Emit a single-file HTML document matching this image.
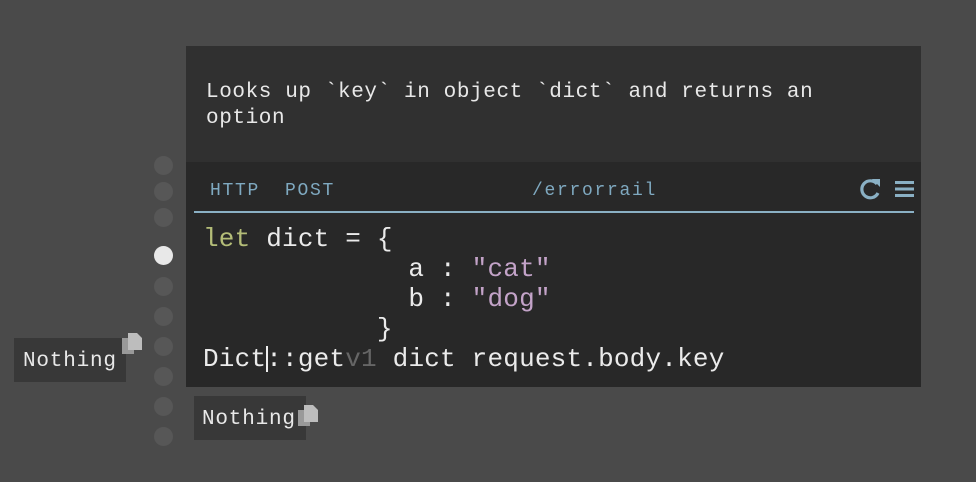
<!DOCTYPE html>
<html><head><meta charset="utf-8"><style>
*{margin:0;padding:0;box-sizing:border-box}
body{width:976px;height:482px;background:#4a4a4a;position:relative;overflow:hidden;font-family:"Liberation Mono",monospace;}
.abs{position:absolute;white-space:pre}
.doc{left:186px;top:46px;width:735px;height:116px;background:#303030}
.code{left:186px;top:162px;width:735px;height:225px;background:#282828}
.dot{position:absolute;left:154px;width:19px;height:19px;border-radius:50%;background:#575757}
.nt{background:#383838;color:#e8e8e8;font-size:21px;letter-spacing:0.8px;padding:0}
.c{font-size:26px;letter-spacing:0.2px;color:#ebebeb}
</style></head><body>
<div class="abs doc"></div>
<div class="abs code"></div>
<div class="abs" style="left:206px;top:80px;font-size:21px;letter-spacing:0.6px;color:#e8e8e8;line-height:26px">Looks up `key` in object `dict` and returns an
option</div>
<div class="abs" style="left:210px;top:181px;font-size:18px;letter-spacing:1.7px;color:#7fa9c0">HTTP  POST</div>
<div class="abs" style="left:532px;top:181px;font-size:18px;letter-spacing:1.7px;color:#7fa9c0">/errorrail</div>
<div class="abs" style="left:194px;top:211px;width:720px;height:2px;background:#8ab0c4"></div>
<svg class="abs" style="left:858px;top:176px" width="58" height="26" viewBox="0 0 58 26">
<path d="M19 8 A8.5 8.5 0 1 0 20 17" fill="none" stroke="#8ab0c4" stroke-width="3.2"/>
<path d="M14 3 L22 3 L22 11 Z" fill="#8ab0c4"/>
<rect x="37" y="5" width="19" height="3" fill="#8ab0c4"/>
<rect x="37" y="11.5" width="19" height="3" fill="#8ab0c4"/>
<rect x="37" y="18" width="19" height="3" fill="#8ab0c4"/>
</svg>
<div class="abs c" style="left:203px;top:224px;line-height:30px"><span style="color:#b4bd78">let</span> dict = {
             a : <span style="color:#c3a3c8">"cat"</span>
             b : <span style="color:#c3a3c8">"dog"</span>
           }
Dict::get<span style="color:#666">v1</span> dict request.body.key</div>
<div class="abs" style="left:266px;top:346px;width:2px;height:26px;background:#eee"></div>
<div class="dot" style="top:156px"></div><div class="dot" style="top:182px"></div><div class="dot" style="top:208px"></div>
<div class="dot" style="top:246px;background:#e8e8e8"></div>
<div class="dot" style="top:277px"></div><div class="dot" style="top:307px"></div><div class="dot" style="top:337px"></div><div class="dot" style="top:367px"></div><div class="dot" style="top:397px"></div><div class="dot" style="top:427px"></div>
<div class="abs nt" style="left:14px;top:338px;width:112px;height:44px;line-height:48px;padding-left:9px">Nothing</div>
<div class="abs nt" style="left:194px;top:396px;width:112px;height:44px;line-height:48px;padding-left:8px">Nothing</div>
<svg class="abs" style="left:122px;top:332px" width="22" height="24" viewBox="0 0 22 24"><rect x="0" y="6" width="12" height="16" fill="#999"/><path d="M6 1 H15 L20 6 V18 H6 Z" fill="#bdbdbd"/></svg>
<svg class="abs" style="left:298px;top:404px" width="22" height="24" viewBox="0 0 22 24"><rect x="0" y="6" width="12" height="16" fill="#999"/><path d="M6 1 H15 L20 6 V18 H6 Z" fill="#bdbdbd"/></svg>
</body></html>
